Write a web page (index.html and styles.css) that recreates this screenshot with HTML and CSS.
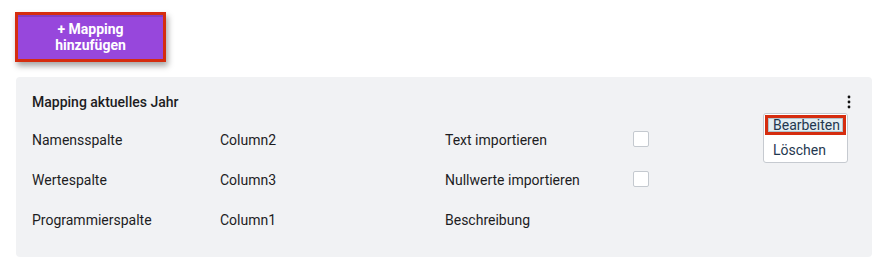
FILE: index.html
```html
<!doctype html>
<html lang="de">
    <head>
        <meta charset="UTF-8" />
        <title>Mappings</title>
        <link rel="stylesheet" href="styles.css">
    </head>
    <body>
        <button class="add-btn">+ Mapping<br>hinzufügen</button>

        <div class="mapping-card">
            <div class="card-header">
                <span class="card-title">Mapping aktuelles Jahr</span>
                <svg class="kebab" width="4" height="14" viewBox="0 0 4 14">
                    <circle cx="2" cy="2" r="1.4" />
                    <circle cx="2" cy="7" r="1.4" />
                    <circle cx="2" cy="12" r="1.4" />
                </svg>
            </div>

            <div class="mapping-grid">
                <div class="cell">Namensspalte</div>
                <div class="cell">Column2</div>
                <div class="cell">Text importieren</div>
                <div class="cell"><span class="checkbox"></span></div>

                <div class="cell">Wertespalte</div>
                <div class="cell">Column3</div>
                <div class="cell">Nullwerte importieren</div>
                <div class="cell"><span class="checkbox"></span></div>

                <div class="cell">Programmierspalte</div>
                <div class="cell">Column1</div>
                <div class="cell">Beschreibung</div>
                <div class="cell"></div>
            </div>

            <div class="menu">
                <div class="menu-item active">Bearbeiten</div>
                <div class="menu-item">Löschen</div>
            </div>
        </div>
    </body>
</html>
```

FILE: styles.css
```css
body {
    font-family: Roboto, "Liberation Sans", sans-serif;
    font-size: 14px;
    color: #1d1d1f;
    background-color: #ffffff;
    margin: 0;
    padding: 12px 0 0 15px;
}
.add-btn {
    display: block;
    box-sizing: border-box;
    width: 151px;
    height: 50px;
    padding: 0;
    background-color: #9747dc;
    color: #ffffff;
    border: 3px solid #d52d0f;
    font-family: Roboto, "Liberation Sans", sans-serif;
    font-size: 14px;
    font-weight: bold;
    line-height: 16px;
    box-shadow: 2px 4px 6px rgba(0, 0, 0, 0.35), inset 0 2px 0 rgba(90, 40, 150, 0.35);
    cursor: pointer;
}
.mapping-card {
    position: relative;
    box-sizing: border-box;
    width: 856px;
    height: 180px;
    margin: 15px 0 0 1px;
    padding: 15px 16px 0 16px;
    background-color: #f1f2f4;
    border-radius: 4px;
}
.card-header {
    display: flex;
    align-items: center;
    justify-content: space-between;
    height: 20px;
    padding-right: 5px;
}
.card-title {
    font-weight: 500;
}
.kebab {
    fill: #111111;
}
.mapping-grid {
    display: grid;
    grid-template-columns: 188px 225px 188px 16px;
    grid-auto-rows: 40px;
    margin-top: 8px;
}
.cell {
    display: flex;
    align-items: center;
}
.checkbox {
    display: block;
    box-sizing: border-box;
    width: 16px;
    height: 16px;
    margin-top: -2px;
    background-color: #ffffff;
    border: 1px solid #c4c9cf;
    border-radius: 2px;
}
.menu {
    position: absolute;
    top: 36px;
    left: 747px;
    box-sizing: border-box;
    width: 85px;
    height: 50px;
    padding: 1px;
    background-color: #ffffff;
    border: 1px solid #c6cad0;
    border-radius: 3px;
    color: #1f3850;
}
.menu-item {
    box-sizing: border-box;
    height: 20px;
    line-height: 20px;
    padding-left: 8px;
    margin-bottom: 5px;
}
.menu-item.active {
    width: 81px;
    padding-left: 5px;
    line-height: 14px;
    background-color: #e4eef2;
    border: 3px solid #d52d0f;
    box-shadow: inset 0 0 0 1px rgba(30, 70, 90, 0.25);
}
```
